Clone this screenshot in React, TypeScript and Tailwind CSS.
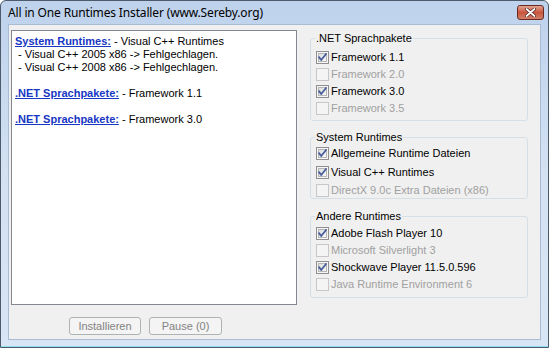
import React from 'react';

const UI_FONT = 'font-["Liberation_Sans",Arial,sans-serif]';

function CheckBox({ checked, disabled }: { checked?: boolean; disabled?: boolean }) {
  return (
    <svg width="13" height="13" viewBox="0 0 13 13" className="shrink-0">
      <defs>
        <linearGradient id="cbFill" x1="0" y1="0" x2="1" y2="1">
          <stop offset="0" stopColor="#dcdcdc" />
          <stop offset="1" stopColor="#fbfbfb" />
        </linearGradient>
      </defs>
      <rect x="0.5" y="0.5" width="12" height="12" fill={disabled ? '#f4f4f4' : '#f6f6f6'} stroke={disabled ? '#c7c7c7' : '#8f8f8f'} />
      {!disabled && <rect x="2.5" y="2.5" width="8" height="8" fill="url(#cbFill)" stroke="#b6b6b6" />}
      {checked && (
        <path d="M3 6.2 L5.2 9 L10 3" fill="none" stroke="#4b5f9c" strokeWidth="1.9" strokeLinecap="round" strokeLinejoin="round" />
      )}
    </svg>
  );
}

function Option({ label, checked, disabled }: { label: string; checked?: boolean; disabled?: boolean }) {
  return (
    <div className="flex items-center gap-[2px] h-[17px]">
      <CheckBox checked={checked} disabled={disabled} />
      <span className={disabled ? 'text-[#a0a0a0]' : 'text-black'}>{label}</span>
    </div>
  );
}

function Group({ title, h, pt, children }: { title: string; h: string; pt: string; children: React.ReactNode }) {
  return (
    <fieldset className={`border border-[#d5dfe5] rounded-[3px] px-[5px] ${h} ${pt}`}>
      <legend className="-ml-[1px] px-[1px] leading-[13px] text-black">{title}</legend>
      {children}
    </fieldset>
  );
}

function LogLine({ link, text }: { link?: string; text: string }) {
  return (
    <div className="h-[13px] leading-[13px] whitespace-pre">
      {link && <span className="font-bold underline text-[#1737c4]">{link}</span>}
      {text}
    </div>
  );
}

export default function App() {
  return (
    <div className={`w-[549px] h-[348px] ${UI_FONT} text-[11px] flex flex-col bg-gradient-to-b from-[#bed2ec] via-[#d3e1f2] to-[#d8e5f4] border border-[#4d5a6c] rounded-t-[6px] overflow-hidden`}>
      {/* title bar */}
      <div className="h-[23px] flex items-center pl-[7px] pr-[4px] shrink-0">
        <span className="flex-1 text-[12px] text-black font-['Noto_Sans',sans-serif] leading-none tracking-[-0.15px]">All in One Runtimes Installer (www.Sereby.org)</span>
        <div className="w-[27px] h-[15px] rounded-[3px] border border-[#6b2b22] bg-gradient-to-b from-[#e2a293] via-[#c8553c] to-[#d0806a] flex items-center justify-center">
          <svg width="11" height="9" viewBox="0 0 11 9">
            <path d="M1.5 1 L9.5 8 M9.5 1 L1.5 8" stroke="#4b1d16" strokeWidth="3.2" strokeLinecap="round" />
            <path d="M1.5 1 L9.5 8 M9.5 1 L1.5 8" stroke="#ffffff" strokeWidth="1.8" strokeLinecap="round" />
          </svg>
        </div>
      </div>

      {/* client area */}
      <div className="flex-1 mx-[7px] bg-[#f0f0f0] border border-[#a9bcd4] flex">
        <div className="flex flex-col pl-[2px] pt-[5px]">
          <div className="w-[286px] h-[275px] bg-white border border-[#828790] pl-[3px] pt-[4px] text-black">
            <LogLine link="System Runtimes:" text=" - Visual C++ Runtimes" />
            <LogLine text=" - Visual C++ 2005 x86 -> Fehlgechlagen." />
            <LogLine text=" - Visual C++ 2008 x86 -> Fehlgechlagen." />
            <LogLine text="" />
            <LogLine link=".NET Sprachpakete:" text=" - Framework 1.1" />
            <LogLine text="" />
            <LogLine link=".NET Sprachpakete:" text=" - Framework 3.0" />
          </div>
          <div className="flex gap-[8px] pl-[58px] pt-[12px]">
            <button className="w-[72px] h-[18px] rounded-[3px] border border-[#adb2b5] bg-[#f4f4f4] text-[#838383] leading-none">Installieren</button>
            <button className="w-[73px] h-[18px] rounded-[3px] border border-[#adb2b5] bg-[#f4f4f4] text-[#838383] leading-none">Pause (0)</button>
          </div>
        </div>

        <div className="w-[218px] ml-[13px] pt-[7px] flex flex-col">
          <Group title=".NET Sprachpakete" h="h-[89px]" pt="pt-[4px]">
            <Option label="Framework 1.1" checked />
            <Option label="Framework 2.0" disabled />
            <Option label="Framework 3.0" checked />
            <Option label="Framework 3.5" disabled />
          </Group>
          <div className="mt-[10px]">
            <Group title="System Runtimes" h="h-[68px]" pt="pt-[1px]">
              <div className="flex flex-col gap-[1.5px]">
                <Option label="Allgemeine Runtime Dateien" checked />
                <Option label="Visual C++ Runtimes" checked />
                <Option label="DirectX 9.0c Extra Dateien (x86)" disabled />
              </div>
            </Group>
          </div>
          <div className="mt-[11px]">
            <Group title="Andere Runtimes" h="h-[88px]" pt="pt-[2px]">
              <Option label="Adobe Flash Player 10" checked />
              <Option label="Microsoft Silverlight 3" disabled />
              <Option label="Shockwave Player 11.5.0.596" checked />
              <Option label="Java Runtime Environment 6" disabled />
            </Group>
          </div>
        </div>
      </div>

      {/* bottom frame */}
      <div className="h-[7px] shrink-0 border-b border-[#8ee0f0]" />
    </div>
  );
}
